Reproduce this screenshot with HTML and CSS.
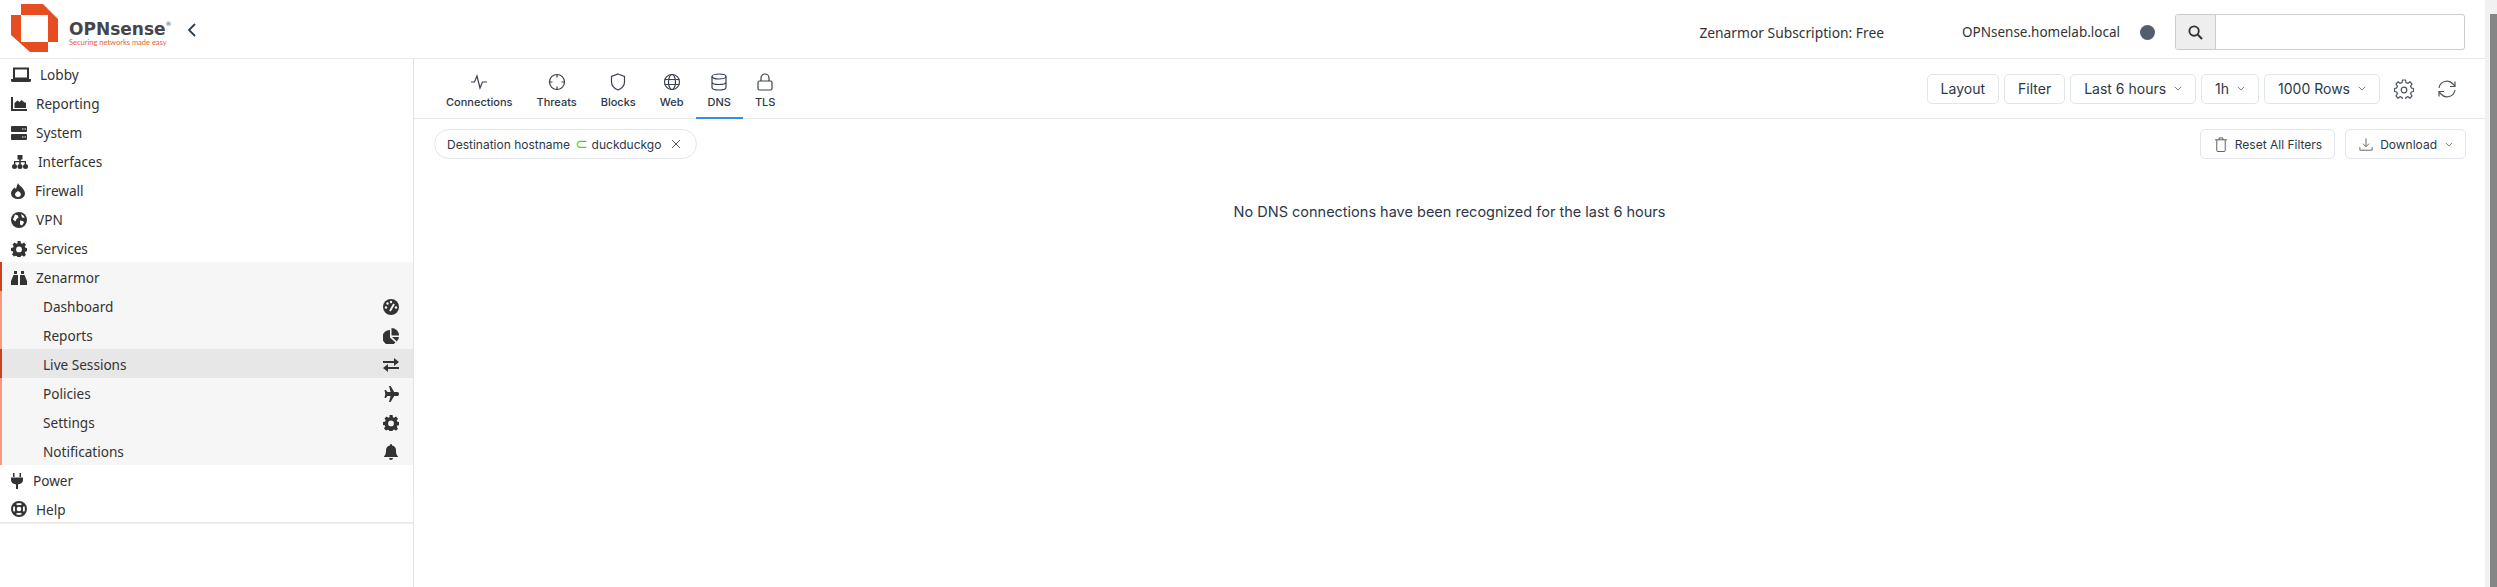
FILE: index.html
```html
<!DOCTYPE html>
<html lang="en">
<head>
  <meta charset="UTF-8" />
  <title>Zenarmor | Live Sessions | OPNsense</title>
  <link rel="stylesheet" href="styles.css">
</head>
<body>
  <div class="page">
    <!-- Top bar -->
    <header class="topbar">
      <div class="brand">
        <svg class="logo-mark" viewBox="0 0 48 48" width="48" height="48">
          <path fill="#e64d21" d="M10 0H32L47 15V38H37V11H10Z"/>
          <path fill="#e64d21" d="M0 11H10V38H37V48H19L0 31Z"/>
        </svg>
        <div class="wordmark">
          <div class="wordmark-name">OPNsense<sup>®</sup></div>
          <div class="wordmark-tag">Securing networks made easy</div>
        </div>
        <svg class="collapse" viewBox="0 0 10 14" width="10" height="14"><path d="M8 1L2 7l6 6" fill="none" stroke="#2c3e50" stroke-width="1.8"/></svg>
      </div>
      <div class="top-right">
        <span class="subscription">Zenarmor Subscription: Free</span>
        <span class="host">OPNsense.homelab.local</span>
        <span class="status-dot"></span>
        <div class="search">
          <span class="search-btn">
            <svg viewBox="0 0 16 16" width="15" height="15"><circle cx="6.5" cy="6.5" r="5" fill="none" stroke="#333" stroke-width="2"/><path d="M10.5 10.5L15 15" stroke="#333" stroke-width="2.2"/></svg>
          </span>
          <span class="search-input"></span>
        </div>
      </div>
    </header>

    <div class="layout">
      <!-- Sidebar -->
      <nav class="sidebar">
        <a class="nav-item"><svg class="ico-lg" viewBox="0 0 20 16"><path fill="none" stroke="#333" stroke-width="2" d="M3 1.5h14v10H3z"/><path fill="#333" d="M0 12h20v1.500q0 1.500-1.500 1.500H1.500Q0 15 0 13.500z"/></svg>Lobby</a>
        <a class="nav-item"><svg class="ico" viewBox="0 0 16 14"><path fill="#333" d="M0 0h2v12h14v2H0z"/><path fill="#333" d="M3.500 11V6l3-2.500 2 1.500 2-2 2.500 2 2 1v5z"/></svg>Reporting</a>
        <a class="nav-item"><svg class="ico" viewBox="0 0 16 14"><path fill="#333" d="M1 0h14q1 0 1 1v4q0 1-1 1H1Q0 6 0 5V1q0-1 1-1zM1 8h14q1 0 1 1v4q0 1-1 1H1q-1 0-1-1V9q0-1 1-1z"/><path fill="#fff" d="M11 2.500h1.500v1H11zM13.500 2.500H15v1h-1.500zM11 10.500h1.500v1H11zM13.500 10.500H15v1h-1.500z"/></svg>System</a>
        <a class="nav-item"><svg class="ico-wide" viewBox="0 0 18 14"><path fill="#333" d="M6.500 0h5v4.500h-1.700V6H15v3h-1.300V7.300H9.800V9H8.200V7.300H4.300V9H3V6h5.200V4.500H6.500z"/><circle fill="#333" cx="3.500" cy="11.500" r="2.500"/><circle fill="#333" cx="9" cy="11.500" r="2.500"/><circle fill="#333" cx="14.500" cy="11.500" r="2.500"/></svg>Interfaces</a>
        <a class="nav-item gap-wide"><svg class="ico-sm" viewBox="0 0 14 16"><path fill="#333" fill-rule="evenodd" d="M7 0c.5 2 4 3.500 5.500 6.500C14 9 14 10 14 10.500A7 5.500 0 0 1 7 16a7 5.500 0 0 1-7-5.500C0 8 2 6 3.500 4.500l1.500 1.500C5.500 4 6 2 7 0zM7 8c-1.500 1-3 2-3 3.500A3 2.800 0 0 0 7 14a3 2.800 0 0 0 3-2.500C10 10 8.500 9 7 8z"/></svg>Firewall</a>
        <a class="nav-item"><svg class="ico" viewBox="0 0 16 16"><circle cx="8" cy="8" r="8" fill="#333"/><path fill="#fff" d="M4 2.500l3 1 .5 2-2 1.500-1 2.500-2.500-2zM9 8.500l3 .5 1 1.500-2 3-2-1zM10 2l3 2 .5 2-2.500-.5z"/></svg>VPN</a>
        <a class="nav-item"><svg class="ico" viewBox="0 0 16 16"><use href="#gear"/></svg>Services</a>

        <div class="group">
          <a class="nav-item group-head"><svg class="ico" viewBox="0 0 16 14"><path fill="#333" d="M3 0h3v3H3zM10 0h3v3h-3zM2.500 4H7v10H0V10zM9 4h4.500L16 10v4H9z"/></svg>Zenarmor</a>
          <a class="sub-item">Dashboard<svg class="sub-ico" viewBox="0 0 16 16"><circle cx="8" cy="8" r="8" fill="#333"/><path stroke="#f6f6f6" stroke-width="1.800" d="M7 12L11 5"/><circle fill="#f6f6f6" cx="3" cy="8.500" r="1.200"/><circle fill="#f6f6f6" cx="4.500" cy="4.500" r="1.200"/><circle fill="#f6f6f6" cx="8" cy="3" r="1.200"/><circle fill="#f6f6f6" cx="13" cy="8.500" r="1.200"/></svg></a>
          <a class="sub-item">Reports<svg class="sub-ico" viewBox="0 0 16 16"><path fill="#333" d="M7 2v7.500l5.500 5A7.500 7.500 0 1 1 7 2z"/><path fill="#333" d="M8.500 0A7.500 7.500 0 0 1 16 7.500H8.500z"/><path fill="#333" d="M9 9h7a7.500 7.500 0 0 1-2.200 4.500z"/></svg></a>
          <a class="sub-item active">Live Sessions<svg class="sub-ico" viewBox="0 0 16 14"><path fill="#333" d="M0 3h11V0l5 4-5 4V5H0zM16 9H5V6l-5 4 5 4v-3h11z"/></svg></a>
          <a class="sub-item">Policies<svg class="sub-ico" viewBox="0 0 16 16"><path fill="#333" d="M6 0h1.600l3.600 6H14.500q1.500 0 1.500 2t-1.500 2H11.200L7.600 16H6l1.600-6H4.300L3 12H1.500l.8-4-.8-4H3l1.300 2H7.600z"/></svg></a>
          <a class="sub-item">Settings<svg class="sub-ico" viewBox="0 0 16 16"><use href="#gear"/></svg></a>
          <a class="sub-item">Notifications<svg class="sub-ico" viewBox="0 0 14 16"><path fill="#333" d="M7 0q1 0 1 1v.600A5 5 0 0 1 12 6.500c0 4 1 4.500 2 6v.500H0v-.500c1-1.500 2-2 2-6a5 5 0 0 1 4-4.900V1q0-1 1-1zM5 14h4a2 2 0 0 1-4 0z"/></svg></a>
        </div>

        <a class="nav-item gap-wide"><svg class="ico-plug" viewBox="0 0 12 16"><path fill="#333" d="M2 0h1.500v4H2zM8.500 0H10v4H8.500zM0 4.500h12V7q0 3.500-5 4.500V16H5v-4.500Q0 10.500 0 7z"/></svg>Power</a>
        <a class="nav-item"><svg class="ico" viewBox="0 0 16 16"><path stroke="#333" stroke-width="3" d="M3 3l3 3M13 3l-3 3M3 13l3-3M13 13l-3-3"/><circle cx="8" cy="8" r="7" fill="none" stroke="#333" stroke-width="2"/><circle cx="8" cy="8" r="3.200" fill="#fff" stroke="#333" stroke-width="1.800"/></svg>Help</a>
      </nav>

      <!-- Main content -->
      <main class="content">
        <div class="tabs-bar">
          <div class="tabs">
            <a class="tab"><svg viewBox="0 0 18 16"><path d="M1 8h3.500L7 2l3 12 2.500-6H17" /></svg>Connections</a>
            <a class="tab"><svg viewBox="0 0 18 18"><circle cx="9" cy="9" r="7.500"/><path d="M9 1.500v3M9 13.500v3M1.500 9h3M13.500 9h3"/></svg>Threats</a>
            <a class="tab"><svg viewBox="0 0 16 18"><path d="M8 1l6.500 2.500V9c0 4-3 6.500-6.500 8C4.500 15.500 1.500 13 1.500 9V3.500z"/></svg>Blocks</a>
            <a class="tab"><svg viewBox="0 0 18 18"><circle cx="9" cy="9" r="7.500"/><ellipse cx="9" cy="9" rx="3.500" ry="7.500"/><path d="M1.500 6.500h15M1.500 11.500h15"/></svg>Web</a>
            <a class="tab active"><svg viewBox="0 0 16 18"><ellipse cx="8" cy="3.500" rx="7" ry="2.500"/><path d="M1 3.500v11C1 16 4 17 8 17s7-1 7-2.500v-11M1 9c0 1.500 3 2.500 7 2.500s7-1 7-2.500"/></svg>DNS</a>
            <a class="tab"><svg viewBox="0 0 16 18"><rect x="1" y="8" width="14" height="9" rx="1.500"/><path d="M4 8V5a4 4 0 0 1 8 0v3"/></svg>TLS</a>
          </div>
          <div class="toolbar">
            <button class="btn">Layout</button>
            <button class="btn">Filter</button>
            <button class="btn">Last 6 hours<svg class="caret" viewBox="0 0 10 6"><path d="M1 1l4 4 4-4"/></svg></button>
            <button class="btn">1h<svg class="caret" viewBox="0 0 10 6"><path d="M1 1l4 4 4-4"/></svg></button>
            <button class="btn">1000 Rows<svg class="caret" viewBox="0 0 10 6"><path d="M1 1l4 4 4-4"/></svg></button>
            <svg class="tool-ico" viewBox="0 0 20 20"><path d="M8.500 1h3l.5 2.500 1.800.8 2.200-1.400 2 2.200-1.400 2.100.8 1.800 2.100.5v3l-2.100.5-.8 1.800 1.400 2.100-2 2.200-2.200-1.400-1.800.8-.5 2.500h-3L8 18.500l-1.800-.8L4 19.100l-2-2.200 1.400-2.100-.8-1.800L.5 12.500v-3l2.100-.5.800-1.800L2 5.100l2-2.200 2.200 1.400L8 3.500z"/><circle cx="10" cy="11" r="2.800"/></svg>
            <svg class="tool-ico" viewBox="0 0 20 20"><path d="M2 9a8 8 0 0 1 14-4l2 2.500M18 2.500v5h-5M18 11a8 8 0 0 1-14 4l-2-2.500M2 17.500v-5h5"/></svg>
          </div>
        </div>
        <div class="filter-bar">
          <span class="chip">Destination hostname<span class="chip-op">⊂</span>duckduckgo<svg class="chip-x" viewBox="0 0 10 10"><path d="M1 1l8 8M9 1l-8 8"/></svg></span>
          <div class="filter-actions">
            <button class="btn btn-sm"><svg class="btn-ico" viewBox="0 0 14 16"><path d="M.5 3h13M5 3V1h4v2M2.500 3v11.500q0 1 1 1h7q1 0 1-1V3"/></svg>Reset All Filters</button>
            <button class="btn btn-sm"><svg class="btn-ico" viewBox="0 0 16 16"><path d="M8 1v9M4.500 7L8 10.500 11.500 7M1 11v3.500h14V11"/></svg>Download<svg class="caret" viewBox="0 0 10 6"><path d="M1 1l4 4 4-4"/></svg></button>
          </div>
        </div>
        <p class="empty">No DNS connections have been recognized for the last 6 hours</p>
      </main>
    </div>
  </div>
  <div class="scrollbar"><span class="thumb"></span></div>

  <svg class="defs" width="0" height="0">
    <defs>
      <path id="gear" fill="#333" fill-rule="evenodd" d="M6.500 0h3l.4 2.200 1.300.6L13 1.500l2 2.200-1.200 1.900.5 1.200 2.200.4v3l-2.200.4-.5 1.300 1.200 1.800-2 2.100-1.800-1.200-1.300.5-.4 2.400h-3l-.4-2.300-1.300-.5L3 15.500l-2-2.100 1.200-1.800-.5-1.300L0 9.900v-3l2.200-.4.500-1.200L1.500 3.500l2-2 1.800 1.300 1.300-.6zM8 5.500a2.900 2.900 0 1 0 0 5.800 2.900 2.900 0 0 0 0-5.800z"/>
    </defs>
  </svg>
</body>
</html>
```

FILE: styles.css
```css
* {
  box-sizing: border-box;
}

html, body {
  height: 100%;
}

body {
  margin: 0;
  font-family: "Noto Sans", sans-serif;
  color: #333;
  background: #fff;
  display: flex;
  overflow: hidden;
}

.defs {
  position: absolute;
}

.page {
  flex: 1;
  min-width: 0;
  display: flex;
  flex-direction: column;
}

.scrollbar {
  width: 12px;
  flex: none;
  background: #f1f1f1;
  padding: 14px 0 0 5px;
  display: flex;
}

.thumb {
  flex: 1;
  background: #858585;
}

.topbar {
  height: 59px;
  flex: none;
  display: flex;
  justify-content: space-between;
  align-items: flex-start;
  border-bottom: 1px solid #e8e8e8;
  padding: 0 20px 0 11px;
}

.brand {
  display: flex;
  align-items: center;
  padding-top: 4px;
}

.wordmark {
  margin: 13px 0 0 10px;
  width: 110px;
}

.wordmark-name {
  font-family: "DejaVu Sans", sans-serif;
  font-weight: 700;
  font-size: 17px;
  line-height: 16px;
  color: #45454a;
  white-space: nowrap;
}

.wordmark-name sup {
  font-size: 6px;
  font-weight: 400;
  vertical-align: 9px;
  line-height: 0;
}

.wordmark-tag {
  font-family: "Lato", sans-serif;
  font-size: 7.5px;
  line-height: 10px;
  margin-top: 1px;
  color: #e8603a;
  white-space: nowrap;
}

.collapse {
  margin: 4px 0 0 8px;
}

.top-right {
  display: flex;
  align-items: center;
  font-size: 13.5px;
  padding-top: 14px;
}

.subscription {
  font-size: 13.8px;
  margin-right: 78px;
}

.host {
  margin-right: 20px;
}

.status-dot {
  width: 15px;
  height: 15px;
  border-radius: 50%;
  background: #545d6e;
  margin-right: 20px;
}

.search {
  display: flex;
  width: 290px;
  height: 36px;
  border: 1px solid #ccc;
  border-radius: 3px;
  overflow: hidden;
}

.search-btn {
  width: 40px;
  background: #eee;
  border-right: 1px solid #ccc;
  display: flex;
  align-items: center;
  justify-content: center;
}

.search-input {
  flex: 1;
}

.layout {
  flex: 1;
  display: flex;
  min-height: 0;
}

/* sidebar */
.sidebar {
  width: 414px;
  flex: none;
  border-right: 1px solid #e3e3e3;
}

.nav-item {
  display: flex;
  align-items: center;
  height: 29px;
  padding: 2px 0 0 11px;
  font-size: 13.6px;
  color: #333;
}

.nav-item svg {
  margin-right: 9px;
}

.nav-item.gap-wide svg {
  margin-right: 10px;
}

.ico {
  width: 16px;
  height: 16px;
}

.ico-lg {
  width: 20px;
  height: 16px;
}

.ico-wide {
  width: 18px;
  height: 14px;
}

.ico-sm {
  width: 14px;
  height: 16px;
}

.ico-plug {
  width: 12px;
  height: 16px;
}

.group {
  background: #f6f6f6;
  border-left: 2px solid #f59a80;
}

.group-head {
  margin-left: -2px;
  border-left: 2px solid #c9441c;
  padding-left: 9px;
}

.sub-item {
  display: flex;
  align-items: center;
  justify-content: space-between;
  height: 29px;
  padding: 2px 14px 0 41px;
  font-size: 13.6px;
  color: #333;
}

.sub-item.active {
  background: #e7e7e7;
  margin-left: -2px;
  border-left: 2px solid #c9441c;
}

.sub-ico {
  width: 16px;
  height: 16px;
}

.sidebar > .nav-item:last-child {
  border-bottom: 1px solid #e8e8e8;
  box-shadow: 0 1px 1px #f0f0f0;
}

/* main */
.content {
  flex: 1;
  min-width: 0;
  font-family: "Inter", sans-serif;
  color: #2d3748;
}

.tabs-bar {
  height: 60px;
  display: flex;
  justify-content: space-between;
  align-items: center;
  border-bottom: 1px solid #e6e6e6;
  padding-right: 28px;
}

.tabs {
  display: flex;
  padding-left: 20px;
  height: 60px;
}

.tab {
  display: flex;
  flex-direction: column;
  align-items: center;
  justify-content: flex-end;
  font-size: 11px;
  font-weight: 500;
  line-height: 14px;
  padding: 0 12px 10px;
  height: 60px;
  color: #2d3748;
}

.tab svg {
  width: 18px;
  height: 18px;
  fill: none;
  stroke: #3a4350;
  stroke-width: 1.2;
  margin-bottom: 4px;
}

.tab.active {
  border-bottom: 2px solid #3b8de0;
  padding-bottom: 8px;
}

.toolbar {
  display: flex;
  align-items: center;
  gap: 5px;
}

.btn {
  display: inline-flex;
  align-items: center;
  height: 30px;
  padding: 0 13px;
  background: #fff;
  border: 1px solid #e2e5ea;
  border-radius: 5px;
  font-family: "Inter", sans-serif;
  font-size: 14px;
  color: #2d3748;
}

.caret {
  width: 8px;
  height: 5px;
  margin-left: 8px;
  fill: none;
  stroke: #555;
  stroke-width: 1;
}

.tool-ico {
  width: 20px;
  height: 20px;
  margin-left: 9px;
  fill: none;
  stroke: #4a5260;
  stroke-width: 1.2;
}

.tool-ico + .tool-ico {
  margin-left: 18px;
}

.filter-bar {
  display: flex;
  justify-content: space-between;
  align-items: center;
  height: 50px;
  padding: 0 19px 0 20px;
}

.chip {
  display: inline-flex;
  align-items: center;
  height: 30px;
  padding: 0 15px 0 12px;
  border: 1px solid #e2e5ea;
  border-radius: 15px;
  font-size: 12px;
  white-space: pre;
}

.chip-op {
  font-family: "DejaVu Sans", sans-serif;
  font-size: 15px;
  line-height: 1;
  margin: 0 4px 0 5px;
  color: #5cc72f;
}

.chip-x {
  width: 10px;
  height: 10px;
  margin-left: 10px;
  stroke: #555;
  stroke-width: 1;
  fill: none;
}

.filter-actions {
  display: flex;
  gap: 10px;
}

.btn-sm {
  font-size: 12px;
  padding: 0 12px 0 13px;
}

.btn-ico {
  width: 14px;
  height: 15px;
  margin-right: 7px;
  fill: none;
  stroke: #555;
  stroke-width: 1;
}

.empty {
  margin: 34px 0 0;
  text-align: center;
  font-size: 14.5px;
  color: #2d3748;
}
```
